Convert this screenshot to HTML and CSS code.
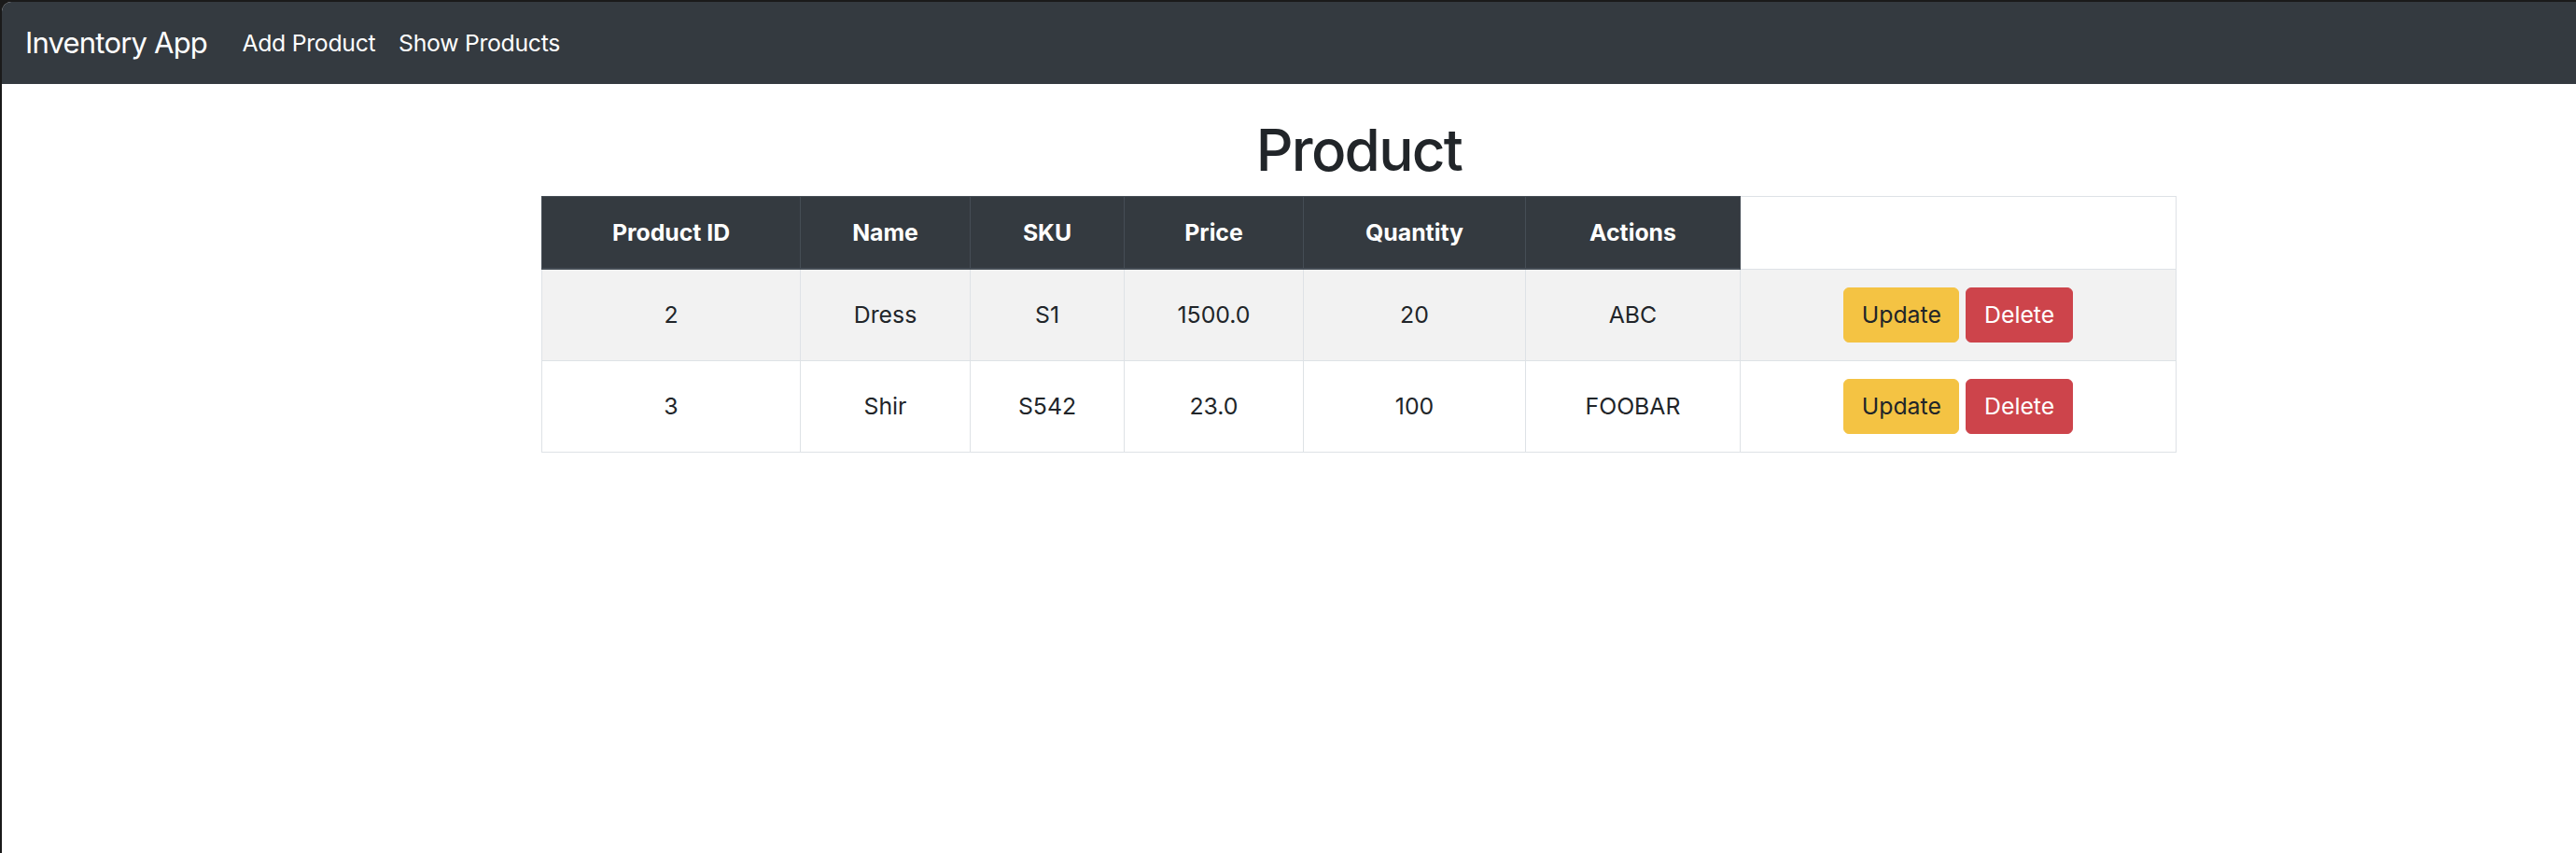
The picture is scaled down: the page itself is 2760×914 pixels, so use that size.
FILE: index.html
```html
<!DOCTYPE html>
<html lang="en">
<head>
<meta charset="utf-8">
<title>Inventory App</title>
<link rel="stylesheet" href="styles.css">
</head>
<body>
<div class="window">
  <nav class="navbar">
    <a class="brand" href="#">Inventory App</a>
    <ul class="nav">
      <li><a class="nav-link" href="#">Add Product</a></li>
      <li><a class="nav-link" href="#">Show Products</a></li>
    </ul>
  </nav>
  <main class="content">
    <h1 class="title">Product</h1>
    <table class="table">
      <colgroup>
        <col class="c-id"><col class="c-name"><col class="c-sku"><col class="c-price"><col class="c-qty"><col class="c-act"><col class="c-btn">
      </colgroup>
      <thead>
        <tr>
          <th>Product ID</th>
          <th>Name</th>
          <th>SKU</th>
          <th>Price</th>
          <th>Quantity</th>
          <th>Actions</th>
        </tr>
      </thead>
      <tbody>
        <tr class="odd">
          <td>2</td>
          <td>Dress</td>
          <td>S1</td>
          <td>1500.0</td>
          <td>20</td>
          <td>ABC</td>
          <td><button class="btn btn-warning">Update</button> <button class="btn btn-danger">Delete</button></td>
        </tr>
        <tr>
          <td>3</td>
          <td>Shir</td>
          <td>S542</td>
          <td>23.0</td>
          <td>100</td>
          <td>FOOBAR</td>
          <td><button class="btn btn-warning">Update</button> <button class="btn btn-danger">Delete</button></td>
        </tr>
      </tbody>
    </table>
  </main>
</div>
</body>
</html>
```

FILE: styles.css
```css
html, body {
  margin: 0;
  height: 100%;
}
body {
  background: #1a1a1a;
  padding: 2px 0 0 2px;
  box-sizing: border-box;
  font-family: Inter, "Liberation Sans", sans-serif;
  color: #212529;
}
.window {
  background: #fff;
  height: 100%;
  border-top-left-radius: 10px;
  overflow: hidden;
}
.navbar {
  background: #343a40;
  height: 88px;
  display: flex;
  align-items: center;
  padding: 0 25px;
}
.brand {
  font-size: 31px;
  letter-spacing: -0.026em;
  color: #fff;
  text-decoration: none;
  margin-right: 25px;
  line-height: 46px;
}
.nav {
  display: flex;
  list-style: none;
  margin: 0;
  padding: 0;
}
.nav-link {
  display: block;
  font-size: 24.8px;
  letter-spacing: -0.012em;
  line-height: 37px;
  padding: 0 12.4px;
  color: #fff;
  text-decoration: none;
}
.content {
  margin-left: 578px;
  width: 1752px;
  padding-top: 34px;
}
.title {
  font-size: 62px;
  font-weight: 500;
  letter-spacing: -0.028em;
  line-height: 1.2;
  margin: 0 0 12px;
  text-align: center;
  color: #212529;
}
.table {
  width: 1752px;
  border-collapse: collapse;
  table-layout: fixed;
  border: 1px solid #dee2e6;
  font-size: 24.8px;
  line-height: 37px;
}
.c-id { width: 277px; }
.c-name { width: 182px; }
.c-sku { width: 165px; }
.c-price { width: 192px; }
.c-qty { width: 238px; }
.c-act { width: 230px; }
.table th {
  background: #343a40;
  color: #fff;
  font-weight: 700;
  border: 1px solid #454d55;
  border-bottom-width: 2px;
  padding: 19.5px 18px;
  text-align: center;
  vertical-align: middle;
}
.table td {
  border: 1px solid #dee2e6;
  padding: 19px 18px;
  text-align: center;
  vertical-align: middle;
}
.table tr.odd td {
  background: #f2f2f2;
}
.btn {
  display: inline-block;
  font-family: inherit;
  font-size: 24.8px;
  line-height: 37px;
  padding: 10px 18.6px;
  border: 1px solid transparent;
  border-radius: 6px;
  vertical-align: middle;
}
.btn-warning {
  background: #f4c343;
  border-color: #f4c343;
  color: #212529;
}
.btn-danger {
  background: #cd444b;
  border-color: #cd444b;
  color: #fff;
}
```
